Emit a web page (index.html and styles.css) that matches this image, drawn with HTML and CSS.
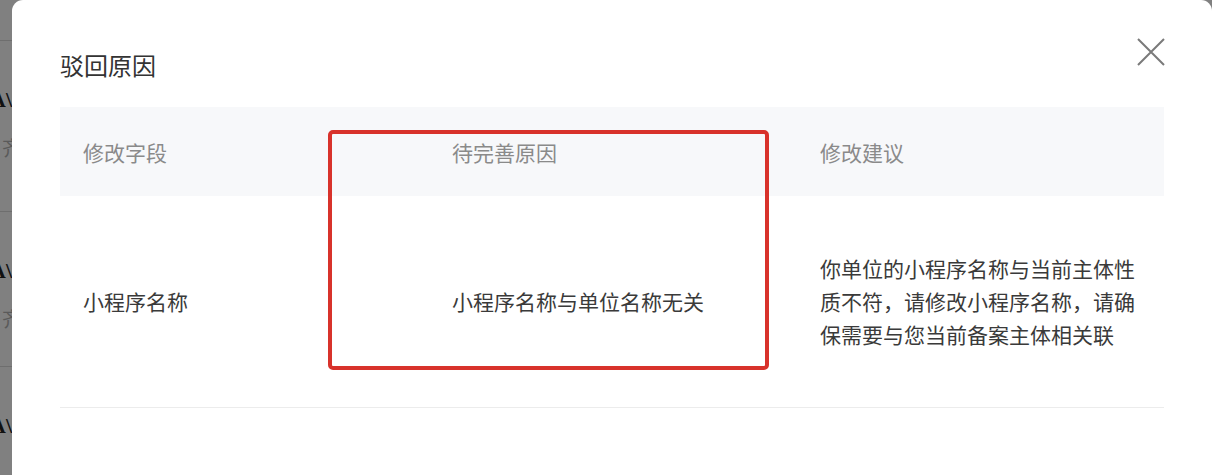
FILE: index.html
```html
<!DOCTYPE html>
<html lang="zh-CN">
<head>
<meta charset="utf-8">
<link rel="stylesheet" href="styles.css">
<title>驳回原因</title>
</head>
<body>
<div class="screen">
  <div class="backdrop">
    <div class="bg-row r1"><span class="bg-a">A\</span><span class="bg-b">齐</span></div>
    <div class="bg-row r2"><span class="bg-a">A\</span><span class="bg-b">齐</span></div>
    <div class="bg-row r3"><span class="bg-a">A\</span></div>
  </div>
  <div class="modal">
    <div class="modal-head">
      <h2 class="modal-title">驳回原因</h2>
      <button class="close" aria-label="关闭">
        <svg width="28" height="28" viewBox="0 0 28 28"><path d="M1 1L27 27M27 1L1 27" stroke="#7a7a7a" stroke-width="2" fill="none"/></svg>
      </button>
    </div>
    <div class="table">
      <div class="thead">
        <div class="cell">修改字段</div>
        <div class="cell">待完善原因</div>
        <div class="cell">修改建议</div>
      </div>
      <div class="trow">
        <div class="cell">小程序名称</div>
        <div class="cell">小程序名称与单位名称无关</div>
        <div class="cell">你单位的小程序名称与当前主体性质不符，请修改小程序名称，请确保需要与您当前备案主体相关联</div>
      </div>
      <div class="mark"></div>
    </div>
  </div>
</div>
</body>
</html>
```

FILE: styles.css
```css
html, body {
  margin: 0;
  padding: 0;
  background: #808080;
  font-family: "Noto Sans CJK SC", "Noto Sans", sans-serif;
  overflow: hidden;
}
.screen {
  display: flex;
  width: 1212px;
  height: 475px;
  overflow: hidden;
}
.backdrop {
  width: 12px;
  flex: none;
  overflow: hidden;
  background: #808080;
  display: flex;
  flex-direction: column;
}
.bg-row {
  border-top: 1px solid #6e6e6e;
  display: flex;
  flex-direction: column;
  width: 60px;
  margin-left: -28px;
}
.r1 { margin-top: 40px; height: 172px; }
.r2 { height: 156px; }
.r3 { height: 110px; }
.bg-a {
  font-family: "Liberation Serif", serif;
  font-size: 22px;
  font-weight: bold;
  color: #111;
  margin-top: 46px;
  line-height: 26px;
  text-align: right;
  padding-right: 20px;
}
.bg-b {
  font-size: 20px;
  color: #5a5a5a;
  margin-top: 22px;
  line-height: 26px;
  text-align: right;
  padding-right: 10px;
}
.modal {
  flex: none;
  width: 1200px;
  height: 520px;
  background: #fff;
  border-radius: 11px;
  padding: 0 48px;
  box-sizing: border-box;
}
.modal-head {
  display: flex;
  justify-content: space-between;
  align-items: flex-start;
}
.modal-title {
  margin: 48px 0 0;
  font-size: 24px;
  font-weight: normal;
  line-height: 33px;
  color: #333;
}
.close {
  margin: 38px -1px 0 0;
  padding: 0;
  border: 0;
  background: none;
  width: 28px;
  height: 28px;
  display: flex;
}
.table {
  margin-top: 26px;
  position: relative;
  font-size: 21px;
  color: #3a3a3a;
}
.thead, .trow {
  display: grid;
  grid-template-columns: 369px 368px 1fr;
  align-items: center;
}
.thead {
  height: 89px;
  background: #f7f8fa;
  color: #8a8a8a;
}
.trow {
  height: 211px;
  border-bottom: 1px solid #ececec;
  line-height: 33px;
}
.cell {
  padding: 0 23px;
}
.mark {
  position: absolute;
  left: 268px;
  top: 23px;
  width: 433px;
  height: 232px;
  border: 4px solid #d8322b;
  border-radius: 5px;
}
```
